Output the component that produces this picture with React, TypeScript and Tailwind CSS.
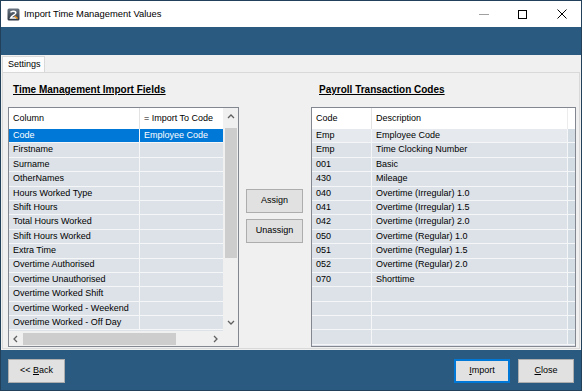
import React from "react";

const leftRows = [
  "Code",
  "Firstname",
  "Surname",
  "OtherNames",
  "Hours Worked Type",
  "Shift Hours",
  "Total Hours Worked",
  "Shift Hours Worked",
  "Extra Time",
  "Overtime Authorised",
  "Overtime Unauthorised",
  "Overtime Worked Shift",
  "Overtime Worked - Weekend",
  "Overtime Worked - Off Day",
];

const payCodes = [
  ["Emp", "Employee Code"],
  ["Emp", "Time Clocking Number"],
  ["001", "Basic"],
  ["430", "Mileage"],
  ["040", "Overtime (Irregular) 1.0"],
  ["041", "Overtime (Irregular) 1.5"],
  ["042", "Overtime (Irregular) 2.0"],
  ["050", "Overtime (Regular) 1.0"],
  ["051", "Overtime (Regular) 1.5"],
  ["052", "Overtime (Regular) 2.0"],
  ["070", "Shorttime"],
  ["", ""],
  ["", ""],
  ["", ""],
  ["", ""],
];

function Chevron({ dir }: { dir: "up" | "down" | "left" | "right" }) {
  const pts = {
    up: "1,5 4,2 7,5",
    down: "1,2 4,5 7,2",
    left: "5,1 2,4 5,7",
    right: "2,1 5,4 2,7",
  }[dir];
  return (
    <svg width="8" height="8" viewBox="0 0 8 8">
      <polyline points={pts} fill="none" stroke="#606060" strokeWidth="1.3" />
    </svg>
  );
}

function AppIcon() {
  return (
    <svg width="13" height="13" viewBox="0 0 13 13">
      <defs>
        <linearGradient id="ig" x1="0" y1="0" x2="0" y2="1">
          <stop offset="0" stopColor="#6b7683" />
          <stop offset="1" stopColor="#2c3642" />
        </linearGradient>
      </defs>
      <rect x="0.5" y="0.5" width="12" height="12" rx="1.5" fill="url(#ig)" />
      <path d="M3.5 4.3 C4.5 2.6 9 2.8 8.8 5 C8.6 6.8 5 7.4 3.6 10 H9.5" fill="none" stroke="#fff" strokeWidth="1.5" />
      <path d="M7.6 8 L10.6 10.6" stroke="#f0961e" strokeWidth="1.4" />
    </svg>
  );
}

function WinButton({ children, focused = false, w = "w-[57px]" }: { children: React.ReactNode; focused?: boolean; w?: string }) {
  return (
    <div
      className={`${w} h-[24px] flex items-center justify-center bg-[#e1e1e1] text-[9px] text-black ${
        focused ? "border-2 border-[#0078d7]" : "border border-[#adadad]"
      }`}
    >
      <span className="whitespace-pre">{children}</span>
    </div>
  );
}

function ImportFieldsGrid() {
  return (
    <div className="w-[231px] h-[240px] border border-[#828790] bg-white flex flex-col">
      <div className="flex flex-1 min-h-0">
        <div className="w-[214px] flex flex-col">
          <div className="h-[21px] flex bg-white shrink-0">
            <div className="w-[131px] pl-[4px] flex items-center border-r border-[#e3e3e3]">Column</div>
            <div className="flex-1 pl-[4px] flex items-center">= Import To Code</div>
          </div>
          <div className="flex-1 overflow-hidden bg-[#dce2e8]">
            {leftRows.map((r, i) => (
              <div
                key={r}
                className={`flex h-[14.4px] border-b border-[#f4f6f8] ${i === 0 ? "bg-[#0078d7] text-white" : ""}`}
              >
                <div className="w-[131px] pl-[4px] flex items-center border-r border-[#f4f6f8] whitespace-nowrap">{r}</div>
                <div className="flex-1 pl-[4px] flex items-center whitespace-nowrap">{i === 0 ? "Employee Code" : ""}</div>
              </div>
            ))}
          </div>
        </div>
        <div className="w-[15px] bg-[#f0f0f0] flex flex-col items-center">
          <div className="h-[17px] flex items-center justify-center">
            <Chevron dir="up" />
          </div>
          <div className="mt-[3px] h-[130px] w-[12px] bg-[#cdcdcd]" />
          <div className="flex-1" />
          <div className="h-[17px] flex items-center justify-center">
            <Chevron dir="down" />
          </div>
        </div>
      </div>
      <div className="flex h-[15px] shrink-0">
        <div className="w-[214px] bg-[#f0f0f0] flex items-center">
          <div className="w-[14px] flex justify-center">
            <Chevron dir="left" />
          </div>
          <div className="w-[153px] h-[12px] bg-[#cdcdcd]" />
          <div className="flex-1" />
          <div className="w-[14px] flex justify-center">
            <Chevron dir="right" />
          </div>
        </div>
        <div className="w-[15px] bg-[#f0f0f0]" />
      </div>
    </div>
  );
}

function PayCodesGrid() {
  return (
    <div className="w-[265px] h-[240px] border border-[#828790] bg-white flex flex-col overflow-hidden">
      <div className="h-[21px] flex bg-white shrink-0">
        <div className="w-[60px] pl-[4px] flex items-center border-r border-[#e3e3e3]">Code</div>
        <div className="w-[196px] pl-[4px] flex items-center border-r border-[#ececec]">Description</div>
        <div className="flex-1" />
      </div>
      <div className="flex-1 overflow-hidden bg-[#dce2e8]">
        {payCodes.map(([c, d], i) => (
          <div key={i} className={`flex h-[14.4px] border-b border-[#f4f6f8] ${i === 0 ? "bg-[#e6eaee]" : ""}`}>
            <div className="w-[60px] pl-[4px] flex items-center border-r border-[#f4f6f8]">{c}</div>
            <div className="w-[196px] pl-[4px] flex items-center border-r border-[#f4f6f8] whitespace-nowrap">{d}</div>
            <div className="flex-1 bg-[#d3dbe3]" />
          </div>
        ))}
      </div>
    </div>
  );
}

export default function App() {
  return (
    <div className="w-[582px] h-[391px] flex flex-col border border-[#23405a] bg-[#2a5a7f] font-['Liberation_Sans',Arial,sans-serif] text-black text-[9px] overflow-hidden">
      {/* title bar */}
      <div className="h-[26px] bg-white flex items-center shrink-0">
        <div className="ml-[6px] mt-[1px] flex">
          <AppIcon />
        </div>
        <span className="ml-[4px] text-[9.4px] text-black">Import Time Management Values</span>
        <div className="flex-1" />
        <div className="w-[39px] h-full flex items-center justify-center">
          <div className="w-[10px] h-px bg-[#a0a0a0]" />
        </div>
        <div className="w-[39px] h-full flex items-center justify-center">
          <div className="w-[9px] h-[9px] border border-black" />
        </div>
        <div className="w-[39px] h-full flex items-center justify-center">
          <svg width="10" height="10" viewBox="0 0 10 10">
            <path d="M0.5 0.5 L9.5 9.5 M9.5 0.5 L0.5 9.5" stroke="#000" strokeWidth="1" />
          </svg>
        </div>
      </div>

      {/* blue band */}
      <div className="h-[28px] shrink-0" />

      {/* tab control */}
      <div className="h-[295px] bg-[#f0f0f0] flex flex-col shrink-0">
        <div className="h-[17px] flex items-end">
          <div className="ml-[1px] w-[43px] h-[16px] bg-[#fcfcfc] border border-b-0 border-[#d9d9d9] flex items-center pl-[5px]">
            Settings
          </div>
        </div>
        <div className="mx-[1px] h-[277px] border border-[#d9d9d9] bg-[#f0f0f0] flex flex-col">
          <div className="h-[34px] flex shrink-0">
            <div className="w-[236px] pl-[10px] pt-[9px] font-bold text-[10px] underline underline-offset-[1px]">
              Time Management Import Fields
            </div>
            <div className="w-[72px]" />
            <div className="pl-[8px] pt-[9px] font-bold text-[10px] underline underline-offset-[1px]">
              Payroll Transaction Codes
            </div>
          </div>
          <div className="flex pl-[5px]">
            <ImportFieldsGrid />
            <div className="w-[72px] pl-[7px] pt-[82px] flex flex-col gap-[6px]">
              <WinButton>Assign</WinButton>
              <WinButton>Unassign</WinButton>
            </div>
            <PayCodesGrid />
          </div>
        </div>
      </div>

      {/* footer */}
      <div className="flex-1 flex items-start pt-[9px] px-[7px]">
        <WinButton>
          {"<< "}
          <span className="underline">B</span>ack
        </WinButton>
        <div className="flex-1" />
        <WinButton focused w="w-[56px]">
          <span className="underline">I</span>mport
        </WinButton>
        <div className="w-[8px]" />
        <WinButton w="w-[56px]">
          <span className="underline">C</span>lose
        </WinButton>
      </div>
    </div>
  );
}
